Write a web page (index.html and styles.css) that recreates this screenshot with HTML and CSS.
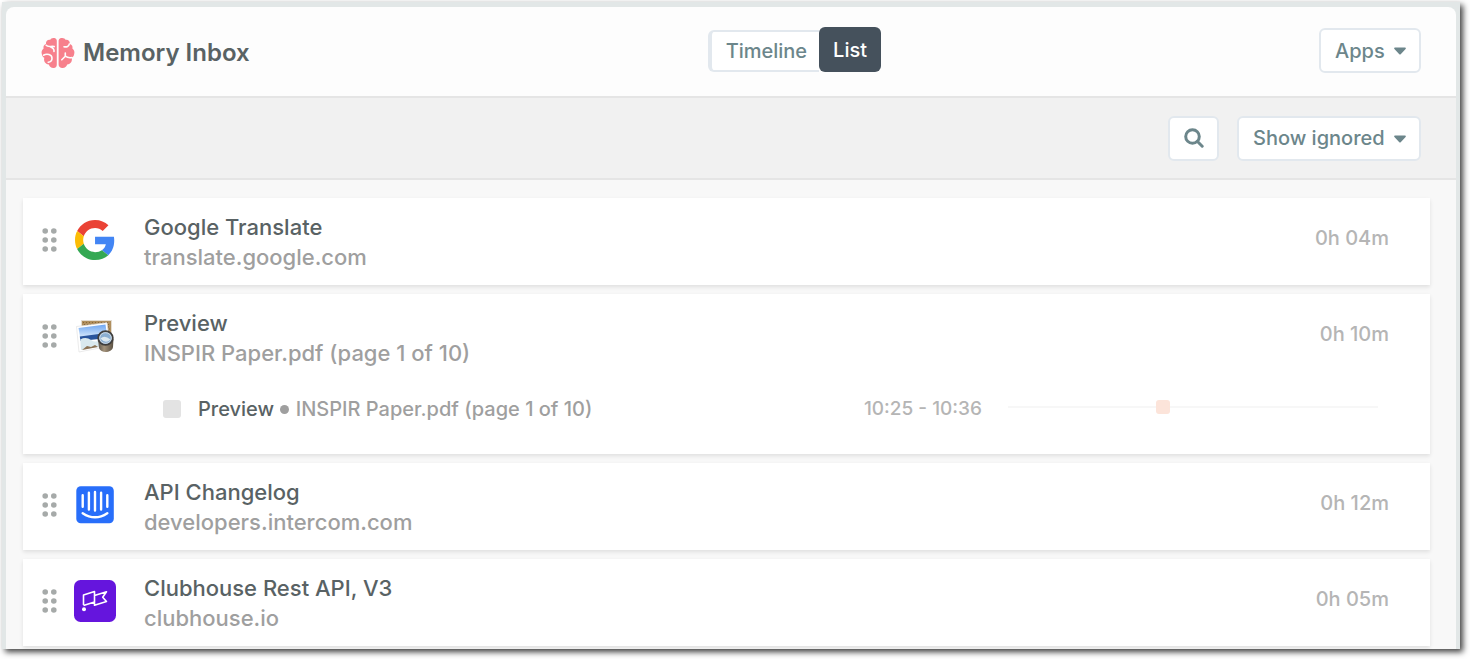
FILE: index.html
```
<!DOCTYPE html>
<html lang="en">
<head>
  <meta charset="utf-8">
  <title>Memory Inbox</title>
  <link rel="stylesheet" href="styles.css">
</head>
<body>
  <svg class="defs" aria-hidden="true">
    <symbol id="dots" viewBox="0 0 16 26">
      <circle cx="4.2" cy="4" r="2.8"/><circle cx="12.8" cy="4" r="2.8"/>
      <circle cx="4.2" cy="13" r="2.8"/><circle cx="12.8" cy="13" r="2.8"/>
      <circle cx="4.2" cy="22" r="2.8"/><circle cx="12.8" cy="22" r="2.8"/>
    </symbol>
    <symbol id="caret" viewBox="0 0 12 8">
      <path d="M1 .5h10c.8 0 1.200.9.6 1.400L6.700 7.200a1 1 0 0 1-1.400 0L.4 1.900C-.2 1.400.2.5 1 .5z"/>
    </symbol>
  </svg>

  <div class="panel">
    <header class="header">
      <h1 class="title">
        <svg class="brain" viewBox="0 0 34 32">
          <path fill="#f7808c" d="M15.800 3.500C15.500 1.500 14 1 12.300 1C10.800 1 9.800 1.700 9.300 2.800C6.500 2.300 4.600 4.200 5 7C3 7.600 2 9.500 2.600 11.500C.8 12.900.2 15 .8 17C.9 18.800 2 20.200 3.300 20.800C2.400 24 4.200 27.200 7.800 27.600C8.600 29.800 10.300 31.200 12.800 31C14.700 30.900 15.800 29.600 15.800 27.500z"/>
          <path fill="#f7808c" d="M17.600 3.500C18 1.500 19.500 1 21.200 1C22.900 1 24 1.700 24.500 2.800C27.300 2.300 29.200 4.200 28.800 7C31 7.600 32 9.500 31.400 11.500C33.200 12.900 33.800 15 33.200 17C33.100 18.800 32 20.200 30.700 20.800C31.600 24 29.800 27.200 26.200 27.600C25.400 29.800 23.700 31.200 21.200 31C19.300 30.900 17.600 29.600 17.600 27.500z"/>
          <path class="folds" d="M5.200 8.300C7 10.600 10.500 8.800 13.200 9.600M9.800 10C12 11 13.300 12.400 13 14.500M2.500 18.200C6 16.200 10.800 17.500 11 21C11.100 23.500 9.800 25.200 7.200 25.200M28.300 7C28 9.300 25.800 10.300 23 9.700M20.800 22.800L24.300 19.200V16M24.300 19.200C26.500 20.800 28.500 21 31 20.500"/>
        </svg>
        Memory Inbox
      </h1>
      <div class="toggle">
        <button type="button" class="toggle-btn">Timeline</button>
        <button type="button" class="toggle-btn active">List</button>
      </div>
      <div class="dropdown">
        <select class="box" aria-label="Apps"><option>Apps</option></select>
        <svg class="caret"><use href="#caret"/></svg>
      </div>
    </header>

    <div class="toolbar">
      <button type="button" class="box search" aria-label="Search">
        <svg width="20" height="20" viewBox="0 0 20 20" fill="none" stroke="currentColor" stroke-width="3" stroke-linecap="round">
          <circle cx="8.500" cy="8.500" r="6.800"/>
          <path d="M13.500 13.500L18.200 18.200"/>
        </svg>
      </button>
      <div class="dropdown">
        <select class="box" aria-label="Show ignored"><option>Show ignored</option></select>
        <svg class="caret"><use href="#caret"/></svg>
      </div>
    </div>

    <main class="list">
      <article class="card">
        <div class="row">
          <svg class="dots"><use href="#dots"/></svg>
          <svg class="icon" viewBox="0 0 42 42">
            <g transform="translate(1 1) scale(.835)">
              <path fill="#EA4335" d="M24 9.500c3.540 0 6.710 1.220 9.210 3.600l6.850-6.850C35.900 2.380 30.470 0 24 0 14.620 0 6.510 5.380 2.560 13.220l7.980 6.190C12.430 13.720 17.740 9.500 24 9.500z"/>
              <path fill="#4285F4" d="M46.980 24.550c0-1.570-.15-3.090-.38-4.550H24v9.020h12.940c-.58 2.960-2.260 5.480-4.780 7.180l7.730 6c4.510-4.180 7.090-10.360 7.090-17.650z"/>
              <path fill="#FBBC05" d="M10.530 28.590c-.48-1.450-.76-2.990-.76-4.590s.27-3.140.76-4.590l-7.980-6.190C.92 16.460 0 20.120 0 24c0 3.880.92 7.540 2.560 10.780l7.970-6.190z"/>
              <path fill="#34A853" d="M24 48c6.480 0 11.930-2.130 15.890-5.810l-7.730-6c-2.150 1.450-4.920 2.300-8.160 2.300-6.260 0-11.570-4.220-13.470-9.910l-7.980 6.190C6.510 42.620 14.620 48 24 48z"/>
            </g>
          </svg>
          <div class="info">
            <h2 class="name">Google Translate</h2>
            <p class="source">translate.google.com</p>
          </div>
          <time class="duration">0h 04m</time>
        </div>
      </article>

      <article class="card">
        <div class="row">
          <svg class="dots"><use href="#dots"/></svg>
          <svg class="icon" viewBox="0 0 42 42">
            <defs>
              <linearGradient id="sky" x1="0" y1="0" x2="0" y2="1">
                <stop offset="0" stop-color="#6ea6f2"/>
                <stop offset="1" stop-color="#d5e8fb"/>
              </linearGradient>
              <linearGradient id="tube" x1="0" y1="0" x2="1" y2="0">
                <stop offset="0" stop-color="#5d564b"/>
                <stop offset=".4" stop-color="#a3927a"/>
                <stop offset="1" stop-color="#5a5043"/>
              </linearGradient>
            </defs>
            <path fill="#e4ddd2" d="M7 5h31v25H7z"/>
            <path fill="#b08f5e" d="M8 6h29v22H8z"/>
            <path stroke="#86673a" stroke-dasharray="1 2" d="M9 7.500h27M10 9.500h27M34 12h3M35 14h2M34 16h3"/>
            <path fill="#fff" stroke="#ddd" stroke-width=".6" d="M2.500 11.500L33 7.700L36 31L5 37z"/>
            <path fill="url(#sky)" d="M4.500 13L31.500 9.500L33 20L6 22z"/>
            <path fill="#28549c" d="M5.800 21.500L32.500 18L34 23L6.500 26z"/>
            <path fill="#d9e9ee" d="M6.300 24.500Q12 21.500 17 25T27 24L29 31L7 35z"/>
            <path fill="#8b7355" d="M8 35L13 31L17 32L21 30L24 32z"/>
            <path fill="url(#tube)" d="M24 24h15.500l-.5 8c-1 6-12 7-14 1z"/>
            <ellipse cx="31.500" cy="23" rx="7.300" ry="6.800" fill="#8aaed1" stroke="#403e3c" stroke-width="1.800"/>
            <ellipse cx="31.500" cy="23" rx="5.800" ry="5.300" fill="none" stroke="#dfe5e8" stroke-width=".8"/>
            <path fill="#dce8ef" d="M26.500 23.500q4-4 10 1q-5 5-10-1z"/>
          </svg>
          <div class="info">
            <h2 class="name">Preview</h2>
            <p class="source">INSPIR Paper.pdf (page 1 of 10)</p>
          </div>
          <time class="duration">0h 10m</time>
        </div>
        <div class="entry">
          <input type="checkbox" id="entry1" class="check">
          <label for="entry1" class="entry-label"><b>Preview</b> <i class="bullet"></i> INSPIR Paper.pdf (page 1 of 10)</label>
          <span class="range">10:25 - 10:36</span>
          <div class="track"><span class="mark" style="left: 40%"></span></div>
        </div>
      </article>

      <article class="card">
        <div class="row">
          <svg class="dots"><use href="#dots"/></svg>
          <svg class="icon" viewBox="0 0 42 42">
            <rect x="2.300" y="2.300" width="37.500" height="37" rx="4.500" fill="#286efa"/>
            <path fill="none" stroke="#fff" stroke-width="2.400" stroke-linecap="round" d="M8.700 11.200v11.500M14.900 8.800v16.800M21 8v18.600M27.100 8.800v16.800M33.300 11.200v11.500M8.700 29.200q12.300 8.200 24.600 0"/>
          </svg>
          <div class="info">
            <h2 class="name">API Changelog</h2>
            <p class="source">developers.intercom.com</p>
          </div>
          <time class="duration">0h 12m</time>
        </div>
      </article>

      <article class="card">
        <div class="row">
          <svg class="dots"><use href="#dots"/></svg>
          <svg class="icon" viewBox="0 0 42 42">
            <rect width="42" height="42" rx="6.500" fill="#6515dd"/>
            <path fill="none" stroke="#fff" stroke-width="1.600" stroke-linejoin="round" d="M9.500 25V15L20.500 11.500V22L9.500 25.500M20.500 15.500L32.500 11.800L28.700 17.200L32.500 21.500L20.500 25.300z"/>
            <circle cx="10" cy="29.200" r="2" fill="#fff"/>
          </svg>
          <div class="info">
            <h2 class="name">Clubhouse Rest API, V3</h2>
            <p class="source">clubhouse.io</p>
          </div>
          <time class="duration">0h 05m</time>
        </div>
      </article>
    </main>
  </div>
</body>
</html>
```

FILE: styles.css
```
* {
  box-sizing: border-box;
}

body {
  margin: 0;
  padding: 2px 10px 10px 2px;
  background: #fff;
  color: #596264;
  font-family: Inter, "Liberation Sans", sans-serif;
  font-size: 20px;
  font-weight: 500;
  line-height: 30px;
}

h1, h2, p {
  margin: 0;
}

.defs {
  display: none;
}

.panel {
  min-height: calc(100vh - 12px);
  padding: 5px 4px 0;
  background: #e2e7e7;
  box-shadow: 3px 3px 6px rgba(0, 0, 0, 0.75);
}

/* header */

.header {
  display: flex;
  justify-content: space-between;
  align-items: center;
  height: 91px;
  padding: 0 35px 2px;
  background: #fdfdfd;
  border-bottom: 2px solid #e5e5e5;
  border-radius: 8px 8px 0 0;
}

.title {
  display: flex;
  align-items: center;
  gap: 8px;
  padding: 5px 20px 0 0;
  font-size: 24px;
  font-weight: 600;
}

.brain {
  width: 34px;
  height: 32px;
}

.folds {
  fill: none;
  stroke: #fdfdfd;
  stroke-width: 1.6;
  stroke-linecap: round;
}

.toggle {
  display: flex;
  align-items: flex-end;
  padding-bottom: 2px;
}

.toggle-btn {
  height: 42px;
  padding: 0 12px 0 14px;
  background: #fff;
  border: 2px solid #e2e8ee;
  border-left-width: 4px;
  border-right: 0;
  border-radius: 6px 0 0 6px;
  color: #6c868b;
  font: inherit;
}

.toggle-btn.active {
  height: 45px;
  padding: 0 14px;
  background: #45515c;
  border: 0;
  border-radius: 6px;
  color: #fff;
}

.box {
  height: 45px;
  padding: 0 34px 0 14px;
  appearance: none;
  background: #fff;
  border: 2px solid #e2e8ee;
  border-radius: 6px;
  color: #6c868b;
  font: inherit;
}

.dropdown {
  position: relative;
}

.caret {
  position: absolute;
  top: 19px;
  right: 15px;
  width: 12px;
  height: 8px;
  fill: #6c868b;
  pointer-events: none;
}

/* toolbar */

.toolbar {
  display: flex;
  justify-content: flex-end;
  align-items: center;
  gap: 18px;
  height: 82px;
  padding: 0 35px;
  background: #f1f1f1;
  border-bottom: 2px solid #e5e5e5;
}

.search {
  display: flex;
  align-items: center;
  justify-content: center;
  width: 51px;
  padding: 0;
}

/* list */

.list {
  display: flex;
  flex-direction: column;
  gap: 9px;
  padding: 18px 26px 3px 17px;
  background: #f8f8f8;
}

.card {
  background: #fff;
  box-shadow: 0 2px 4px rgba(0, 0, 0, 0.1);
}

.row {
  display: flex;
  align-items: center;
  height: 87px;
  padding: 0 41px 4px 18px;
}

.dots {
  width: 16px;
  height: 26px;
  fill: #a6aaa9;
}

.icon {
  width: 42px;
  height: 42px;
  margin: 0 28px 0 17px;
}

.info {
  flex: 1;
  padding-top: 4px;
}

.name {
  font-size: 22px;
  font-weight: 500;
}

.source {
  color: #9f9f9f;
  font-size: 22px;
}

.duration {
  padding-bottom: 4px;
  color: #b5b5b5;
}

.entry {
  display: flex;
  align-items: center;
  height: 73px;
  padding: 0 52px 17px 140px;
}

.check {
  width: 18px;
  height: 18px;
  margin: 0 17px 0 0;
  appearance: none;
  background: #e3e3e3;
  border-radius: 3px;
}

.entry-label {
  flex: 1;
  color: #9f9f9f;
}

.entry-label b {
  color: #596264;
  font-weight: 500;
}

.bullet {
  display: inline-block;
  width: 9px;
  height: 9px;
  margin: 0 1px 2px;
  background: #9f9f9f;
  border-radius: 50%;
}

.range {
  color: #b5b5b5;
  font-size: 19px;
}

.track {
  position: relative;
  width: 31%;
  max-width: 370px;
  flex-shrink: 0;
  height: 2px;
  margin: 0 0 4px 26px;
  background: #f7f7f7;
}

.mark {
  position: absolute;
  top: -6px;
  width: 14px;
  height: 14px;
  background: #fce4da;
  border-radius: 3px;
}
```
